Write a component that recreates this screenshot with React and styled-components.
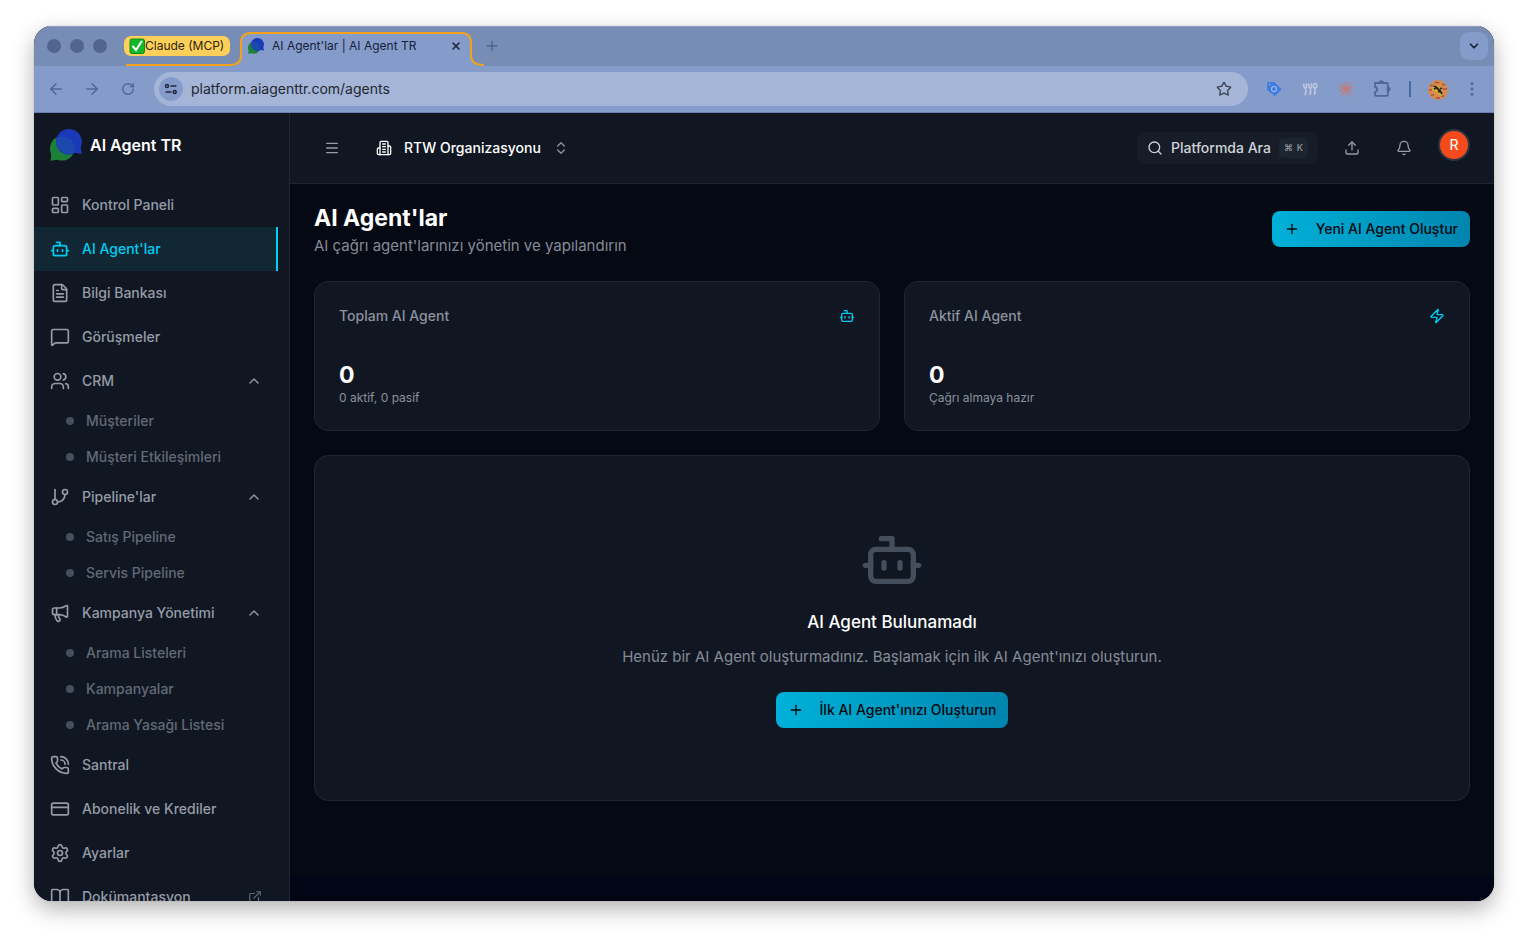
import React from "react";
import styled, { createGlobalStyle, css } from "styled-components";
import {
  ArrowLeft, ArrowRight, Bell, BookOpen, Bot, ChevronDown, ChevronsUpDown, ChevronUp,
  CreditCard, EllipsisVertical, ExternalLink, FileText, GitBranch, LayoutDashboard,
  Megaphone, Menu, MessageSquare, PhoneCall, Plus, RotateCw, Search, Settings, Star,
  Upload, Users, X, Zap,
} from "lucide-react";

const GlobalStyle = createGlobalStyle`
  *, *::before, *::after { box-sizing: border-box; }
  body {
    margin: 0;
    background: #fff;
    font-family: Inter, "Liberation Sans", sans-serif;
    font-size: 14px;
    line-height: 20px;
    color: #fff;
  }
  button, input { font: inherit; color: inherit; border: 0; background: none; padding: 0; margin: 0; }
  a { color: inherit; text-decoration: none; }
  ul { list-style: none; margin: 0; padding: 0; }
  h1, h2, p { margin: 0; }
  svg { display: block; flex-shrink: 0; }
`;

const Desktop = styled.div`
  height: 100vh;
  padding: 26px 34px 42px;
`;

const Window = styled.div`
  height: 100%;
  display: flex;
  flex-direction: column;
  overflow: hidden;
  border-radius: 18px;
  background: #111722;
  box-shadow: 0 0 1px rgba(0, 0, 0, 0.4), 0 8px 22px rgba(0, 0, 0, 0.3);
`;

/* ---------- browser chrome ---------- */

const TabStrip = styled.div`
  display: flex;
  align-items: center;
  flex-shrink: 0;
  height: 40px;
  padding: 0 6px 0 13px;
  background: #788db6;
  box-shadow: inset 0 1px 0 #8fa1c4;
  font-size: 12px;
  line-height: 16px;
  color: #17203a;
`;

const TrafficLights = styled.div`
  display: flex;
  gap: 9px;
`;

const Light = styled.span`
  width: 14px;
  height: 14px;
  border-radius: 50%;
  background: #51658f;
`;

const TabGroup = styled.div`
  position: relative;
  display: flex;
  align-items: center;
  width: 360px;
  height: 40px;
  margin-left: 17px;
`;

const TabOutline = styled.svg`
  position: absolute;
  inset: 0;
`;

const GroupChip = styled.button`
  position: relative;
  display: flex;
  align-items: center;
  width: 106px;
  height: 20px;
  padding: 0 5px;
  border-radius: 7px;
  background: #ffd059;
  color: #2a2410;
  white-space: nowrap;
`;

const Tab = styled.div`
  position: relative;
  display: flex;
  align-items: center;
  flex: 1;
  gap: 8px;
  margin-left: 18px;
  padding-right: 22px;
  white-space: nowrap;
`;

const TabTitle = styled.span`
  flex: 1;
`;

const TabButton = styled.button`
  display: grid;
  place-items: center;
  width: 12px;
  height: 12px;
`;

const NewTab = styled.button`
  display: grid;
  place-items: center;
  width: 16px;
  height: 16px;
  color: #4c6491;
`;

const TabMenu = styled.button`
  display: grid;
  place-items: center;
  width: 28px;
  height: 28px;
  margin-left: auto;
  border-radius: 9px;
  background: #859cca;
  color: #16203a;
`;

const Toolbar = styled.div`
  display: flex;
  align-items: center;
  flex-shrink: 0;
  height: 47px;
  padding: 0 13px;
  background: #859cca;
  border-bottom: 1px solid #6881b3;
  color: #4f6797;
`;

const NavButtons = styled.div`
  display: flex;
  gap: 18px;
`;

const ToolButton = styled.button`
  display: grid;
  place-items: center;
  width: 18px;
  height: 18px;
`;

const AddressBar = styled.label`
  display: flex;
  align-items: center;
  flex: 1;
  gap: 8px;
  height: 34px;
  margin-left: 17px;
  padding: 0 16px 0 5px;
  border-radius: 17px;
  background: #a4b5d8;
  color: #3c434f;
`;

const SiteInfo = styled.span`
  display: grid;
  place-items: center;
  width: 24px;
  height: 24px;
  border-radius: 50%;
  background: #859cca;
`;

const AddressInput = styled.input`
  flex: 1;
  min-width: 0;
  color: #23272f;
  font-size: 14px;
  outline: none;
`;

const Extensions = styled.div`
  display: flex;
  align-items: center;
  gap: 18px;
  margin-left: 17px;
`;

const ToolDivider = styled.span`
  width: 2px;
  height: 16px;
  background: #4668a5;
`;

const ProfileGroup = styled.div`
  display: flex;
  align-items: center;
  gap: 17px;
`;

/* ---------- application ---------- */

const AppShell = styled.div`
  display: flex;
  flex: 1;
  min-height: 0;
`;

const Sidebar = styled.aside`
  display: flex;
  flex-direction: column;
  flex: 0 0 256px;
  overflow: hidden;
  border-right: 1px solid #1f2631;
  background: #111722;
`;

const Brand = styled.a`
  display: flex;
  align-items: center;
  flex-shrink: 0;
  gap: 8px;
  height: 70px;
  padding: 0 16px 6px;
  font-size: 16px;
  font-weight: 600;
`;

const Nav = styled.nav`
  flex: 1;
  min-height: 0;
  overflow: hidden;
  padding-right: 11px;
  color: #959ba7;
`;

const navRow = css`
  display: flex;
  align-items: center;
  gap: 12px;
  width: 100%;
  height: 44px;
  padding: 0 16px;
  font-weight: 500;
  text-align: left;
  white-space: nowrap;
`;

const NavLink = styled.a`
  ${navRow}
  ${({ $active }) => $active && css`
    padding-right: 14px;
    border-right: 2px solid #00d0f5;
    background: #112733;
    color: #00cdf2;
  `}
`;

const NavToggle = styled.button`
  ${navRow}
`;

const NavLabel = styled.span`
  flex: 1;
`;

const SubLink = styled.a`
  display: flex;
  align-items: center;
  gap: 12px;
  height: 36px;
  padding-left: 32px;
  color: #626977;
  font-weight: 500;

  &::before {
    content: "";
    width: 8px;
    height: 8px;
    border-radius: 50%;
    background: #464f5d;
  }
`;

const Main = styled.div`
  display: flex;
  flex-direction: column;
  flex: 1;
  min-width: 0;
  background: #010515;
`;

const Header = styled.header`
  display: flex;
  align-items: center;
  flex-shrink: 0;
  height: 71px;
  padding: 0 24px;
  border-bottom: 1px solid #1f2631;
  background: #111722;
  color: #959ba7;
`;

const IconButton = styled.button`
  display: grid;
  place-items: center;
  width: 36px;
  height: 36px;
`;

const OrgButton = styled.button`
  display: flex;
  align-items: center;
  gap: 12px;
  height: 36px;
  margin-left: 26px;
  color: #fff;
  font-weight: 500;
`;

const Muted = styled.span`
  color: #8b919d;
`;

const HeaderActions = styled.div`
  display: flex;
  align-items: center;
  gap: 16px;
  margin-left: auto;
`;

const SearchButton = styled.button`
  display: flex;
  align-items: center;
  gap: 8px;
  height: 32px;
  padding: 0 10px;
  border-radius: 8px;
  background: #161d29;
  color: #d0d3d8;
  font-weight: 500;
`;

const Shortcut = styled.kbd`
  display: flex;
  align-items: center;
  gap: 4px;
  height: 20px;
  padding: 0 5px;
  border-radius: 5px;
  background: #1c2631;
  color: #959ba7;
  font: 500 9px/20px Inter, "DejaVu Sans", sans-serif;
`;

const Avatar = styled.button`
  width: 32px;
  height: 32px;
  margin-bottom: 6px;
  border: 2px solid #2c3543;
  border-radius: 50%;
  background: #f54a1b;
  color: #fff;
`;

const Content = styled.main`
  display: flex;
  flex-direction: column;
  flex: 1;
  gap: 24px;
  min-height: 0;
  margin-bottom: 25px;
  padding: 17px 24px 0;
  background: #050913;
`;

const PageHead = styled.div`
  display: flex;
  align-items: center;
  justify-content: space-between;
`;

const PageTitle = styled.h1`
  font-size: 23px;
  line-height: 34px;
  font-weight: 700;
`;

const Lead = styled.p`
  font-size: 15px;
  line-height: 22px;
  color: #858b98;
`;

const PrimaryButton = styled.button`
  display: flex;
  align-items: center;
  gap: 16px;
  height: 36px;
  padding: 0 12px;
  border-radius: 8px;
  background: linear-gradient(90deg, #00b1d9, #0085ae);
  color: #03080f;
  font-weight: 500;
  white-space: nowrap;
`;

const Stats = styled.div`
  display: grid;
  grid-template-columns: 1fr 1fr;
  gap: 24px;
`;

const Card = styled.section`
  border: 1px solid #1d2631;
  border-radius: 14px;
  background: #111722;
`;

const StatCard = styled(Card)`
  padding: 24px;
`;

const StatHead = styled.div`
  display: flex;
  align-items: center;
  justify-content: space-between;
  margin-bottom: 34px;
  color: #00cdf2;
`;

const StatLabel = styled.h2`
  color: #8b919d;
  font-size: 14px;
  line-height: 20px;
  font-weight: 500;
`;

const StatValue = styled.div`
  font-size: 23px;
  line-height: 30px;
  font-weight: 700;
`;

const StatNote = styled.p`
  color: #8b919d;
  font-size: 12px;
  line-height: 16px;
`;

const EmptyCard = styled(Card)`
  display: flex;
  flex-direction: column;
  align-items: center;
  padding: 72px 24px;
  color: #454e5d;
`;

const EmptyTitle = styled.h2`
  margin: 16px 0 10px;
  color: #fff;
  font-size: 17px;
  line-height: 28px;
  font-weight: 500;
`;

const EmptyAction = styled(PrimaryButton)`
  margin-top: 24px;
`;

/* ---------- drawings ---------- */

const Logo = ({ size }) => (
  <svg width={size} height={size} viewBox="0 0 32 32" aria-hidden="true">
    <path d="M12.300 7a12.300 12.300 0 1 1-4.800 23.700L.6 31.700l.6-7A12.300 12.300 0 0 1 12.300 7z" fill="#1c8038" />
    <path d="M19 0a12.800 12.800 0 0 1 11.700 18.200l1.200 7-6.600-1.400A12.800 12.800 0 1 1 19 0z" fill="#1a39b8" />
    <path d="M12.500 7.500a12.300 12.300 0 0 1 11.800 15.900A12.800 12.800 0 0 1 6.600 9.100a12 12 0 0 1 5.900-1.600z" fill="#1b49ae" />
  </svg>
);

const CheckMark = () => (
  <svg width="16" height="16" viewBox="0 0 16 16" aria-hidden="true">
    <rect x="1" y="1" width="14.500" height="14.500" rx="2" fill="#11b82a" stroke="#0b8d1c" />
    <path d="M4 8.500l3 3.500 5.500-8.500" fill="none" stroke="#fff" strokeWidth="2" strokeLinecap="round" />
  </svg>
);

const TuneIcon = () => (
  <svg width="14" height="14" viewBox="0 0 14 14" fill="none" stroke="#20283a" strokeWidth="1.500" aria-hidden="true">
    <circle cx="3" cy="4" r="1.500" />
    <path d="M6.500 4H12.500M1.500 10h6" />
    <circle cx="10.700" cy="10" r="1.500" />
  </svg>
);

const TagIcon = () => (
  <svg width="16" height="16" viewBox="0 0 16 16" aria-hidden="true">
    <path d="M1 2.500A1.500 1.500 0 0 1 2.500 1H8.500l6.500 6.500q.6.700 0 1.400L9.500 14.500q-.7.600-1.400 0L1.500 9.500Q1 9 1 8.400z" fill="#3f7de2" />
    <circle cx="8" cy="8" r="2.500" fill="none" stroke="#a4b9e4" strokeWidth="1.200" />
    <circle cx="3.600" cy="3.600" r="1" fill="#859cca" />
  </svg>
);

const ForksIcon = () => (
  <svg width="16" height="16" viewBox="0 0 16 16" fill="none" stroke="#bac5df" strokeWidth="1.700" strokeLinecap="round" aria-hidden="true">
    <path d="M1.800 3v2q0 2 1.800 2.500 1 3-.3 6M4.500 3v2.500q0 1.500-1.200 2M6.800 3v2q0 2 1.500 2.500 1 3-.3 6M9.500 3v2.500q0 1.500-1.200 2M12.800 7.500q1 3-.3 6" />
    <ellipse cx="13" cy="4.800" rx="1.700" ry="2.300" />
  </svg>
);

const burstAngles = [0, 36, 72, 108, 144, 180, 216, 252, 288, 324];

const BurstIcon = () => (
  <svg width="16" height="16" viewBox="0 0 16 16" stroke="#c47b7c" strokeWidth="1.300" strokeLinecap="round" aria-hidden="true">
    {burstAngles.map((angle) => (
      <path key={angle} d="M8 6.500V.8" transform={`rotate(${angle} 8 8)`} />
    ))}
    <circle cx="8" cy="8" r="1.600" fill="#c47b7c" stroke="none" />
  </svg>
);

const PuzzleIcon = () => (
  <svg width="18" height="18" viewBox="0 0 18 18" fill="none" stroke="currentColor" strokeWidth="1.800" strokeLinejoin="round" aria-hidden="true">
    <path d="M2 3.500Q2 3 2.500 3H14q.8 0 .8.800V15q0 .8-.8.800H2.800Q2 15.800 2 15v-3.200q2.200-.3 2.200-2.400T2 7z" />
    <path d="M6.500 3a1.800 1.800 0 0 1 3.600 0zM14.800 7.500a1.800 1.800 0 0 1 0 3.600z" fill="currentColor" />
  </svg>
);

const ProfilePicture = () => (
  <svg width="20" height="20" viewBox="0 0 20 20" aria-hidden="true">
    <circle cx="10" cy="10" r="10" fill="#d98a50" />
    <path d="M2 5.500h3M7 2.500h4M14 4l3 1M1 10h3M15 9h4M3 15h3M8 18h4M13 16h3" stroke="#a25739" strokeWidth="1.400" />
    <path d="M5 5l4 0 6 6-1 5-3-1-3-3-4-2z" fill="#d3ac3a" />
    <path d="M5.500 6l3 1M6 9l2-1M8 7l5 5M10 12l2-1M12 9l2-1M13 12l1 2" fill="none" stroke="#25261e" strokeWidth="1.800" />
  </svg>
);

const BuildingIcon = () => (
  <svg width="16" height="16" viewBox="0 0 24 24" fill="none" stroke="currentColor" strokeWidth="2" strokeLinecap="round" strokeLinejoin="round" aria-hidden="true">
    <path d="M6 22V4a2 2 0 0 1 2-2h8a2 2 0 0 1 2 2v18Z" />
    <path d="M6 12H4a2 2 0 0 0-2 2v6a2 2 0 0 0 2 2h2M18 9h2a2 2 0 0 1 2 2v9a2 2 0 0 1-2 2h-2M10 6h4M10 10h4M10 14h4M10 18h4" />
  </svg>
);

const navigation = [
  { label: "Kontrol Paneli", icon: LayoutDashboard },
  { label: "AI Agent'lar", icon: Bot, active: true },
  { label: "Bilgi Bankası", icon: FileText },
  { label: "Görüşmeler", icon: MessageSquare },
  { label: "CRM", icon: Users, children: ["Müşteriler", "Müşteri Etkileşimleri"] },
  { label: "Pipeline'lar", icon: GitBranch, children: ["Satış Pipeline", "Servis Pipeline"] },
  { label: "Kampanya Yönetimi", icon: Megaphone, children: ["Arama Listeleri", "Kampanyalar", "Arama Yasağı Listesi"] },
  { label: "Santral", icon: PhoneCall },
  { label: "Abonelik ve Krediler", icon: CreditCard },
  { label: "Ayarlar", icon: Settings },
  { label: "Dokümantasyon", icon: BookOpen, external: true },
];

const stats = [
  { label: "Toplam AI Agent", value: "0", note: "0 aktif, 0 pasif", icon: Bot },
  { label: "Aktif AI Agent", value: "0", note: "Çağrı almaya hazır", icon: Zap },
];

function BrowserChrome() {
  return (
    <>
      <TabStrip>
        <TrafficLights><Light /><Light /><Light /></TrafficLights>
        <TabGroup>
          <TabOutline width="360" height="40" viewBox="0 0 360 40" aria-hidden="true">
            <path d="M107 40q10 0 10-10V17Q117 7 127 7H337Q347 7 347 17V30q0 10 11 10z" fill="#859cca" />
            <path d="M2 39H106Q117 39 117 29V17Q117 7 127 7H337Q347 7 347 17V29Q347 39 360 39" fill="none" stroke="#f5a21b" strokeWidth="2" />
          </TabOutline>
          <GroupChip><CheckMark />Claude (MCP)</GroupChip>
          <Tab>
            <Logo size={16} />
            <TabTitle>AI Agent'lar | AI Agent TR</TabTitle>
            <TabButton aria-label="Sekmeyi kapat"><X size={12} strokeWidth={3} /></TabButton>
          </Tab>
        </TabGroup>
        <NewTab aria-label="Yeni sekme"><Plus size={16} /></NewTab>
        <TabMenu aria-label="Sekmelerde ara"><ChevronDown size={14} strokeWidth={3} /></TabMenu>
      </TabStrip>
      <Toolbar>
        <NavButtons>
          <ToolButton aria-label="Geri"><ArrowLeft size={18} /></ToolButton>
          <ToolButton aria-label="İleri"><ArrowRight size={18} /></ToolButton>
          <ToolButton aria-label="Yenile"><RotateCw size={14} strokeWidth={2.4} /></ToolButton>
        </NavButtons>
        <AddressBar>
          <SiteInfo><TuneIcon /></SiteInfo>
          <AddressInput aria-label="Adres" defaultValue="platform.aiagenttr.com/agents" />
          <Star size={16} />
        </AddressBar>
        <Extensions>
          <ToolButton aria-label="Etiketler"><TagIcon /></ToolButton>
          <ToolButton aria-label="Araçlar"><ForksIcon /></ToolButton>
          <ToolButton aria-label="Asistan"><BurstIcon /></ToolButton>
          <ToolButton aria-label="Uzantılar"><PuzzleIcon /></ToolButton>
          <ProfileGroup>
            <ToolDivider />
            <ToolButton aria-label="Profil"><ProfilePicture /></ToolButton>
            <ToolButton aria-label="Menü"><EllipsisVertical size={18} /></ToolButton>
          </ProfileGroup>
        </Extensions>
      </Toolbar>
    </>
  );
}

function NavItem({ item }) {
  const Icon = item.icon;
  if (item.children) {
    return (
      <li>
        <NavToggle aria-expanded="true">
          <Icon size={20} />
          <NavLabel>{item.label}</NavLabel>
          <ChevronUp size={16} />
        </NavToggle>
        <ul>
          {item.children.map((child) => (
            <li key={child}><SubLink href="#">{child}</SubLink></li>
          ))}
        </ul>
      </li>
    );
  }
  return (
    <li>
      <NavLink href="#" $active={item.active}>
        <Icon size={20} />
        <NavLabel>{item.label}</NavLabel>
        {item.external && <ExternalLink size={14} color="#626977" />}
      </NavLink>
    </li>
  );
}

export default function App() {
  return (
    <Desktop>
      <GlobalStyle />
      <Window>
        <BrowserChrome />
        <AppShell>
          <Sidebar>
            <Brand href="#"><Logo size={32} />AI Agent TR</Brand>
            <Nav>
              <ul>
                {navigation.map((item) => <NavItem key={item.label} item={item} />)}
              </ul>
            </Nav>
          </Sidebar>
          <Main>
            <Header>
              <IconButton aria-label="Menüyü daralt"><Menu size={16} /></IconButton>
              <OrgButton>
                <BuildingIcon />
                RTW Organizasyonu
                <Muted><ChevronsUpDown size={16} /></Muted>
              </OrgButton>
              <HeaderActions>
                <SearchButton>
                  <Search size={16} />
                  Platformda Ara
                  <Shortcut><span>⌘</span><span>K</span></Shortcut>
                </SearchButton>
                <IconButton aria-label="Yükle"><Upload size={16} /></IconButton>
                <IconButton aria-label="Bildirimler"><Bell size={16} /></IconButton>
                <Avatar>R</Avatar>
              </HeaderActions>
            </Header>
            <Content>
              <PageHead>
                <div>
                  <PageTitle>AI Agent'lar</PageTitle>
                  <Lead>AI çağrı agent'larınızı yönetin ve yapılandırın</Lead>
                </div>
                <PrimaryButton><Plus size={16} />Yeni AI Agent Oluştur</PrimaryButton>
              </PageHead>
              <Stats>
                {stats.map(({ label, value, note, icon: Icon }) => (
                  <StatCard key={label}>
                    <StatHead><StatLabel>{label}</StatLabel><Icon size={16} /></StatHead>
                    <StatValue>{value}</StatValue>
                    <StatNote>{note}</StatNote>
                  </StatCard>
                ))}
              </Stats>
              <EmptyCard>
                <Bot size={64} />
                <EmptyTitle>AI Agent Bulunamadı</EmptyTitle>
                <Lead>Henüz bir AI Agent oluşturmadınız. Başlamak için ilk AI Agent'ınızı oluşturun.</Lead>
                <EmptyAction><Plus size={16} />İlk AI Agent'ınızı Oluşturun</EmptyAction>
              </EmptyCard>
            </Content>
          </Main>
        </AppShell>
      </Window>
    </Desktop>
  );
}
